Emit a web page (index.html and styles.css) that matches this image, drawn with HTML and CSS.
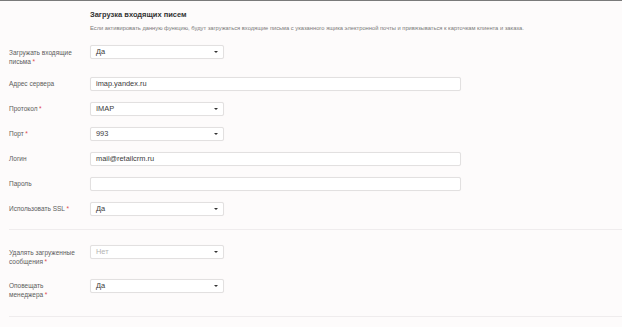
FILE: index.html
```html
<!DOCTYPE html>
<html lang="ru">
<head>
    <meta charset="UTF-8">
    <title>Загрузка входящих писем</title>
    <link rel="stylesheet" href="styles.css">
</head>
<body>
    <div class="settings">
        <div class="section-head">
            <h2>Загрузка входящих писем</h2>
            <p class="desc">Если активировать данную функцию, будут загружаться входящие письма с указанного ящика электронной почты и привязываться к карточкам клиента и заказа.</p>
        </div>

        <div class="group group-first">
            <div class="row">
                <label>Загружать входящие<br>письма<span class="req">*</span></label>
                <div class="select"><span>Да</span><i class="caret"></i></div>
            </div>
            <div class="row">
                <label>Адрес сервера</label>
                <div class="input">imap.yandex.ru</div>
            </div>
            <div class="row">
                <label>Протокол<span class="req">*</span></label>
                <div class="select"><span>IMAP</span><i class="caret"></i></div>
            </div>
            <div class="row">
                <label>Порт<span class="req">*</span></label>
                <div class="select"><span>993</span><i class="caret"></i></div>
            </div>
            <div class="row">
                <label>Логин</label>
                <div class="input">mail@retailcrm.ru</div>
            </div>
            <div class="row">
                <label>Пароль</label>
                <div class="input"></div>
            </div>
            <div class="row">
                <label>Использовать SSL<span class="req">*</span></label>
                <div class="select"><span>Да</span><i class="caret"></i></div>
            </div>
        </div>

        <div class="group group-second">
            <div class="row">
                <label>Удалять загруженные<br>сообщения<span class="req">*</span></label>
                <div class="select is-muted"><span>Нет</span><i class="caret"></i></div>
            </div>
            <div class="row">
                <label>Оповещать<br>менеджера<span class="req">*</span></label>
                <div class="select"><span>Да</span><i class="caret"></i></div>
            </div>
        </div>
    </div>
</body>
</html>
```

FILE: styles.css
```css
* {
    margin: 0;
    padding: 0;
    box-sizing: border-box;
}

body {
    font-family: 'Liberation Sans', Arial, sans-serif;
    background: #fdfbfb;
    color: #333;
}

.settings {
    border-top: 1px solid #7a7a7a;
}

.section-head {
    padding: 9px 0 0 90px;
}

.section-head h2 {
    font-size: 7.5px;
    line-height: 10px;
    font-weight: bold;
    color: #333;
}

.desc {
    margin-top: 4px;
    font-size: 5.75px;
    line-height: 8px;
    color: #7a7a7a;
}

.group {
    margin-left: 9px;
    border-bottom: 1px solid #efeced;
}

.group-first {
    margin-top: 13px;
    padding-bottom: 2.5px;
}

.group-second {
    padding-top: 15px;
    padding-bottom: 4px;
}

.row {
    display: grid;
    grid-template-columns: 81px auto;
    align-items: start;
    margin-bottom: 11px;
}

.group-second .row {
    margin-bottom: 13px;
}

.row label {
    width: 74px;
    padding-top: 2.5px;
    font-size: 6.5px;
    line-height: 9px;
    color: #5c5c5c;
}

.req {
    margin-left: 1.5px;
    color: #e0474c;
}

.select,
.input {
    height: 14px;
    background: #fff;
    border: 1px solid #e2e0e0;
    border-radius: 2px;
    box-shadow: 0 0 1px rgba(0, 0, 0, 0.06);
    font-size: 7.4px;
    line-height: 12px;
    color: #3a3a3a;
    padding-left: 5px;
}

.select {
    width: 134px;
    display: flex;
    align-items: center;
    justify-content: space-between;
    padding-right: 5px;
}

.select.is-muted span {
    color: #b3b3b3;
}

.caret {
    width: 0;
    height: 0;
    border-left: 2px solid transparent;
    border-right: 2px solid transparent;
    border-top: 2.5px solid #333;
}

.input {
    width: 371px;
}
```
